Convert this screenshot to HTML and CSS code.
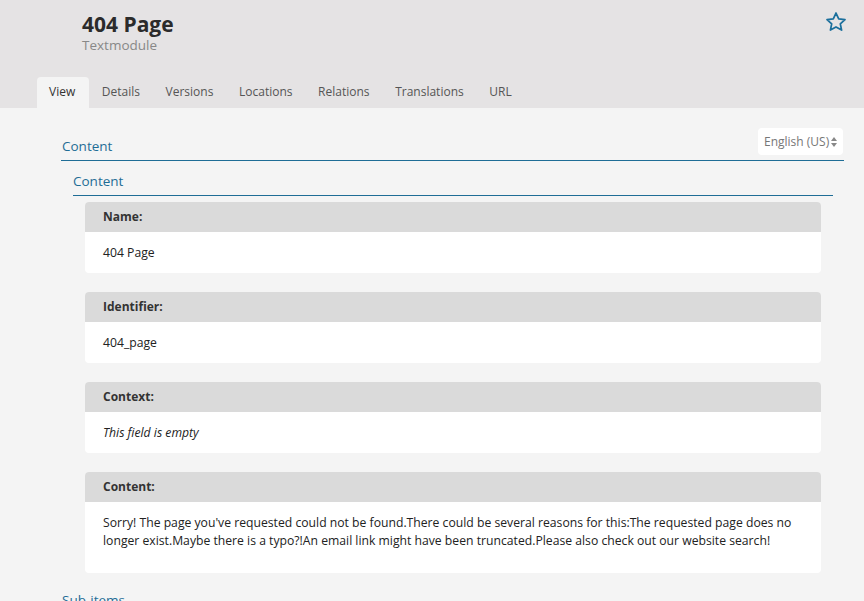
FILE: index.html
```html
<!DOCTYPE html>
<html>
<head>
<meta charset="utf-8">
<link rel="stylesheet" href="styles.css">
</head>
<body>
<header class="header">
  <div class="title-row">
    <div class="titles">
      <h1 class="title">404 Page</h1>
      <div class="subtitle">Textmodule</div>
    </div>
    <svg class="star" width="22" height="22" viewBox="0 0 24 24"><path d="M12 2.2l2.95 6.3 6.85.8-5.1 4.7 1.4 6.8L12 17.4l-6.1 3.4 1.4-6.8-5.1-4.7 6.85-.8z" fill="none" stroke="#1b6f9c" stroke-width="1.9" stroke-linejoin="round"/></svg>
  </div>
  <nav class="tabs">
    <span class="tab active">View</span>
    <span class="tab">Details</span>
    <span class="tab">Versions</span>
    <span class="tab">Locations</span>
    <span class="tab">Relations</span>
    <span class="tab">Translations</span>
    <span class="tab">URL</span>
  </nav>
</header>
<main class="main">
  <div class="section-head">
    <h2 class="section-title">Content</h2>
    <div class="lang">English (US)<svg width="6" height="10" viewBox="0 0 6 10"><path d="M3 0L6 4H0z M3 10L0 6h6z" fill="#888"/></svg></div>
  </div>
  <div class="group">
    <h3 class="group-title">Content</h3>
    <div class="fields">
      <div class="field">
        <div class="field-label">Name:</div>
        <div class="field-value">404 Page</div>
      </div>
      <div class="field">
        <div class="field-label">Identifier:</div>
        <div class="field-value">404_page</div>
      </div>
      <div class="field">
        <div class="field-label">Context:</div>
        <div class="field-value empty">This field is empty</div>
      </div>
      <div class="field">
        <div class="field-label">Content:</div>
        <div class="field-value long">Sorry! The page you've requested could not be found.There could be several reasons for this:The requested page does no longer exist.Maybe there is a typo?!An email link might have been truncated.Please also check out our website search!</div>
      </div>
    </div>
  </div>
  <h2 class="section-title sub">Sub-items</h2>
</main>
</body>
</html>
```
FILE: styles.css
```css
* { box-sizing: border-box; }
html, body { margin: 0; padding: 0; }
body {
  font-family: "Open Sans", "Noto Sans", sans-serif;
  background: #f4f4f4;
  color: #333;
  width: 864px;
  height: 601px;
  overflow: hidden;
}
.header {
  background: #e5e3e4;
  height: 108px;
  display: flex;
  flex-direction: column;
  justify-content: space-between;
}
.title-row {
  display: flex;
  justify-content: space-between;
  padding: 11px 17px 0 82px;
}
.title {
  margin: 0;
  font-size: 21px;
  font-weight: 700;
  line-height: 26px;
  color: #2b2b2b;
}
.subtitle {
  font-size: 13.5px;
  line-height: 16px;
  color: #888;
}
.star { margin-top: 0; }
.tabs {
  display: flex;
  padding-left: 37px;
}
.tab {
  font-size: 12px;
  color: #555;
  padding: 0 12.8px;
  height: 31px;
  line-height: 29px;
  border-radius: 4px 4px 0 0;
}
.tab.active {
  background: #f4f4f4;
  color: #333;
  width: 52px;
  padding: 0 0 0 12px;
}
.main {
  padding: 20px 20px 0 61px;
}
.section-head {
  display: flex;
  justify-content: space-between;
  align-items: flex-end;
  border-bottom: 1px solid #1f6d96;
  padding-bottom: 4px;
}
.section-title {
  margin: 0 0 1px;
  font-size: 13.5px;
  font-weight: 400;
  color: #1f6d96;
  line-height: 18px;
  padding-left: 1px;
}
.lang {
  display: flex;
  align-items: center;
  gap: 2px;
  background: #fff;
  border-radius: 4px;
  height: 27px;
  width: 85px;
  padding: 0 4px 0 6px;
  font-size: 12px;
  color: #777;
  margin-right: 1px;
  margin-bottom: 1px;
}
.group {
  padding: 11px 11px 0 12px;
}
.group-title {
  margin: 0;
  font-size: 13.5px;
  font-weight: 400;
  color: #1f6d96;
  line-height: 18px;
  border-bottom: 1px solid #1f6d96;
  padding-bottom: 5px;
}
.fields {
  display: flex;
  flex-direction: column;
  gap: 19px;
  padding: 6px 12px 0 12px;
}
.field {
  background: #fff;
  border-radius: 4px;
  overflow: hidden;
}
.field-label {
  background: #dadada;
  height: 30px;
  line-height: 30px;
  padding-left: 18px;
  font-size: 12px;
  font-weight: 700;
  color: #333;
}
.field-value {
  padding: 12px 18px 11px;
  font-size: 12.2px;
  line-height: 18px;
  color: #222;
}
.field-value.empty { font-style: italic; }
.field-value.long { padding-bottom: 23px; }
.section-title.sub { margin-top: 18px; }
```
